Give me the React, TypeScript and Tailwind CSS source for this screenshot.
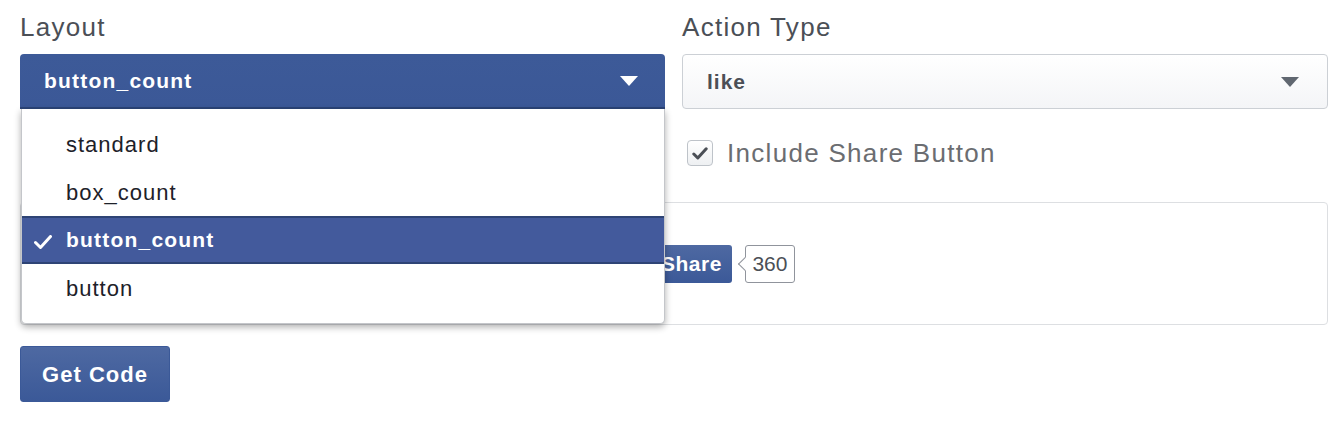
import React from 'react';

const LAYOUTS = ['standard', 'box_count', 'button_count', 'button'];

function Caret({ color }: { color: string }) {
  return (
    <svg width="18" height="10" viewBox="0 0 18 10" aria-hidden="true">
      <path d="M0 0h18L9 10z" fill={color} />
    </svg>
  );
}

function LayoutSelect() {
  const selected = 'button_count';
  return (
    <div className="relative">
      <div className="h-[55px] flex items-center justify-between pl-[24px] pr-[27px] rounded-t-[4px] bg-gradient-to-b from-[#3d5a98] to-[#3b5897] border-b-2 border-[#2b4477] text-white font-bold text-[21px] tracking-[1.2px]">
        <span>{selected}</span>
        <Caret color="#ffffff" />
      </div>
      <ul className="absolute z-10 top-full left-[1px] right-0 py-[11px] bg-white rounded-b-[5px] border border-t-0 border-[#c4c6ca] shadow-[0_3px_7px_rgba(0,0,0,0.32)]">
        {LAYOUTS.map(l => (
          <li
            key={l}
            className={
              l === selected
                ? 'relative h-[48px] flex items-center pl-[44px] bg-[#435a9c] border-y-2 border-[#2e4475] text-white font-bold text-[21px] tracking-[1.2px]'
                : 'h-[48px] flex items-center pl-[44px] text-[#1d2129] text-[22px] tracking-[1px]'
            }
          >
            {l === selected && (
              <svg className="absolute left-[12px] top-[17px]" width="18" height="14" viewBox="0 0 18 14" aria-hidden="true">
                <path d="M1.5 7.5l5 5L16.5 1.5" fill="none" stroke="#ffffff" strokeWidth="3" strokeLinecap="round" strokeLinejoin="round" />
              </svg>
            )}
            {l}
          </li>
        ))}
      </ul>
    </div>
  );
}

export default function App() {
  return (
    <div className="w-[1338px] h-[436px] bg-white pl-5 pr-[10px] pt-[12px] font-['Liberation_Sans',Arial,sans-serif]">
      <div className="grid grid-cols-[645px_646px] gap-[17px]">
        <div>
          <div className="text-[26px] leading-[30px] tracking-[1.3px] text-[#4b4f56] mb-[12px]">Layout</div>
          <LayoutSelect />
        </div>
        <div>
          <div className="text-[26px] leading-[30px] tracking-[1.3px] text-[#4b4f56] mb-[12px]">Action Type</div>
          <div className="h-[55px] flex items-center justify-between pl-[24px] pr-[28px] rounded-[4px] border border-[#ccd0d5] bg-gradient-to-b from-[#ffffff] to-[#f4f5f7] text-[#4b4f56] font-bold text-[21px] tracking-[1px]">
            <span>like</span>
            <Caret color="#606770" />
          </div>
          <label className="mt-[31px] ml-[5px] flex items-center gap-[14px] h-[26px]">
            <span className="w-[26px] h-[26px] rounded-[4px] border border-[#bec3c9] bg-gradient-to-b from-[#ffffff] to-[#eef0f2] flex items-center justify-center">
              <svg width="16" height="13" viewBox="0 0 16 13" aria-hidden="true">
                <path d="M1.8 7l4 4L14.2 1.8" fill="none" stroke="#4b4f56" strokeWidth="3" strokeLinecap="round" strokeLinejoin="round" />
              </svg>
            </span>
            <span className="text-[26px] tracking-[1.3px] text-[#6b6d71]">Include Share Button</span>
          </label>
        </div>
      </div>

      <div className="mt-[36px] h-[123px] rounded-[4px] border border-[#dddfe2] flex items-center pl-[536px]">
        <div className="flex items-center">
          <button className="h-[38px] px-[10px] flex items-center gap-[6px] rounded-[3px] bg-gradient-to-b from-[#4e69a2] to-[#3b5998] text-white font-bold text-[21px] tracking-[0.5px]">
            <svg width="18" height="18" viewBox="0 0 18 18" aria-hidden="true">
              <path d="M2 8h3v8H2zM6 8l4-6c1.5 0 2 1 1.6 2.6L11 7h4.5c1 0 1.6.9 1.3 1.8l-1.8 6c-.3.8-1 1.2-1.8 1.2H6z" fill="#ffffff" />
            </svg>
            Like
          </button>
          <button className="ml-[6px] h-[38px] px-[10px] rounded-[3px] bg-gradient-to-b from-[#4e69a2] to-[#3b5998] text-white font-bold text-[21px] tracking-[0.5px]">
            Share
          </button>
          <span className="relative ml-[13px] h-[38px] w-[50px] flex items-center justify-center rounded-[3px] border border-[#90949c] bg-white text-[#4b4f56] text-[21px]">
            <span className="absolute left-[-6px] top-1/2 -translate-y-1/2 w-[10px] h-[10px] rotate-45 border-l border-b border-[#90949c] bg-white" />
            <span className="relative">360</span>
          </span>
        </div>
      </div>

      <button className="mt-[21px] w-[150px] h-[56px] rounded-[3px] border border-[#3b5998] bg-gradient-to-b from-[#4e69a2] to-[#3b5998] text-white font-bold text-[22px] tracking-[1px]">
        Get Code
      </button>
    </div>
  );
}
